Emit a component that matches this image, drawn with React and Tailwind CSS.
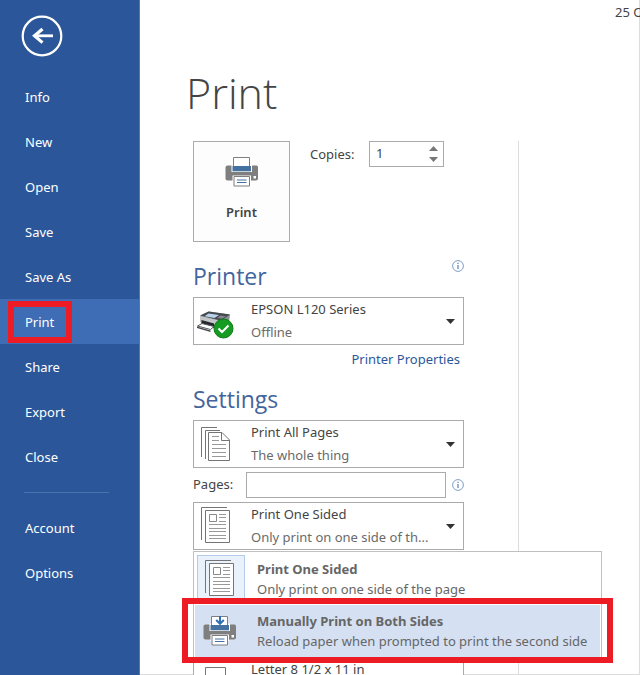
import React, { useState } from "react";

const mainLinks = ["Info", "New", "Open", "Save", "Save As", "Print", "Share", "Export", "Close"];
const accountLinks = ["Account", "Options"];

function BackIcon() {
  return (
    <svg width="42" height="42" viewBox="0 0 42 42" fill="none" stroke="#fff">
      <circle cx="21" cy="21" r="19.3" strokeWidth="2.2" />
      <path d="M13 20.8H32" strokeWidth="2.8" />
      <path d="M21.5 14L13.5 20.8L21.5 27.6" strokeWidth="3.2" />
    </svg>
  );
}

function PrinterIcon({ manual = false }) {
  return (
    <svg width="34" height="32" viewBox="0 0 34 32" fill="none">
      <path d="M2.5 9.5H31.5Q33 9.5 33 11.5V22.5Q33 24.5 31 24.5H2.5Q0.5 24.5 0.5 22.5V11.5Q0.5 9.5 2.5 9.5Z" fill="#7f7f7f" />
      <path d="M6.5 8.5H27V16H6.5Z" fill="#fff" />
      <path d="M8.5 1.5H24.5V12H8.5Z" fill="#fff" stroke="#7f7f7f" />
      <path d="M7.5 10H26V15.3H7.5Z" fill="#44719f" />
      <path d="M7.5 19.5H26V26H7.5Z" fill="#fff" />
      <path d="M9 20.5H24.5V30H9Z" fill="#fff" stroke="#7f7f7f" />
      <path d="M12 24H21.5M12 26.5H21.5" stroke="#44719f" />
      <path d="M28.5 20H31V22.5H28.5Z" fill="#fff" />
      {manual && <path d="M17 1V9M13.2 5L17 8.8L20.8 5" stroke="#2f6eb5" strokeWidth="2" />}
    </svg>
  );
}

function DeviceIcon() {
  return (
    <svg width="44" height="46" viewBox="0 0 44 46" fill="none">
      <path d="M6 18L15 13.5L36 16.5L35 24L26 32L7 25Z" fill="#8d9196" />
      <path d="M6 17.5L14.5 13.5L36 16.5L27 22.5Z" fill="#45484d" />
      <path d="M14.5 15.5L25 17L20.5 20L10.5 18.2Z" fill="#b9d3ec" />
      <path d="M26.5 17.5L32 18.2L28 20.8L23 20Z" fill="#84888e" />
      <path d="M6 18L27 23V33L21 31L19 27L6 24Z" fill="#c3c6ca" />
      <path d="M7.5 22L20 25.5V30L7.5 26.5Z" fill="#25272a" />
      <path d="M3.5 28L8 25.5L20 28.5L16.5 31.5Z" fill="#fff" stroke="#55585c" />
      <path d="M3 28.5L16.5 32.5V34L3 30Z" fill="#45484d" />
      <circle cx="29.5" cy="30.5" r="9.5" fill="#169c22" stroke="#0b7a17" />
      <path d="M24.5 30.5L28 34L34.5 27.5" stroke="#fff" strokeWidth="2" />
    </svg>
  );
}

function PagesIcon() {
  return (
    <svg width="44" height="46" viewBox="0 0 44 46" fill="none" stroke="#757575">
      <path d="M23 6.5H7.5V36" />
      <path d="M26 9.5H11.5V38" />
      <path d="M14.5 11.5H28L35.5 19V39.5H14.5Z" fill="#fff" />
      <path d="M27.5 11.5V19.5H35.5" />
      <path d="M18 15.5H25M18 19.5H25M18 23.5H32M18 27.5H32M18 31.5H32M18 35.5H32" stroke="#999" />
    </svg>
  );
}

function OneSidedIcon() {
  return (
    <svg width="44" height="46" viewBox="0 0 44 46" fill="none" stroke="#757575">
      <path d="M33 4.5H7.5V37" />
      <path d="M11.5 7.5H35.5V39.5H11.5Z" fill="#fff" />
      <path d="M15.5 11.5H22.5V18.5H15.5Z" stroke="#8a8a8a" />
      <path d="M25 11.5H32M25 14.5H32M25 18.5H32M15 21.5H32M15 25.5H32M15 28.5H32M15 32.5H32M15 35.5H32" stroke="#999" />
    </svg>
  );
}

function PaperIcon() {
  return (
    <svg width="44" height="46" viewBox="0 0 44 46" fill="none" stroke="#757575">
      <path d="M11.5 9.5H31.5V40H11.5Z" fill="#fff" />
    </svg>
  );
}

function InfoButton({ label }) {
  return (
    <button type="button" aria-label={label} className="h-3 w-3 shrink-0">
      <svg width="12" height="12" viewBox="0 0 12 12" fill="none">
        <circle cx="6" cy="6" r="5.4" stroke="#7f9fc6" />
        <path d="M6 5V9M6 2.8V4" stroke="#5b7fae" strokeWidth="1.2" />
      </svg>
    </button>
  );
}

function NavItem({ label, active }) {
  return (
    <li>
      <a
        href="#"
        className={
          active
            ? "relative flex h-[45px] items-center bg-[#3e6db5] pl-[25px] pt-[2px]"
            : "flex h-[45px] items-center pl-[25px] pt-[2px] hover:bg-[#3e6db5]"
        }
      >
        {label}
        {active && <span className="absolute left-2 top-[2px] h-[42px] w-16 border-6 border-[#ed1c24]" />}
      </a>
    </li>
  );
}

// Two-line drop-down: the select fills the whole box, icon and hint lie in the same grid
function SettingSelect({ label, value, hint, icon }) {
  return (
    <div className="grid h-12 grid-cols-[57px_1fr_26px] grid-rows-2 border border-[#ababab] bg-white">
      <select
        aria-label={label}
        className="col-span-full col-start-1 row-span-2 row-start-1 appearance-none bg-transparent pb-[22px] pl-[57px] text-[#444]"
      >
        <option>{value}</option>
      </select>
      <span className="pointer-events-none col-start-1 row-span-2 row-start-1">{icon}</span>
      <span className="pointer-events-none col-start-2 row-start-2 whitespace-nowrap leading-[22px] text-[#6a6a6a]">
        {hint}
      </span>
      <span className="pointer-events-none col-start-3 row-span-2 row-start-1 flex items-center pl-[9px]">
        <svg width="9" height="5" viewBox="0 0 9 5">
          <path d="M0 0H9L4.5 5Z" fill="#333" />
        </svg>
      </span>
    </div>
  );
}

function SidesMenu() {
  return (
    <ul
      role="listbox"
      aria-label="Sides"
      className="absolute left-0 top-[49px] z-10 w-[409px] border border-[#c0c0c0] bg-white p-px text-[#666]"
    >
      <li role="option" aria-selected="true" className="flex h-[52px] items-center">
        <span className="ml-[2px] flex h-12 w-12 items-center border border-[#b3cbea] bg-[#e9f1fb]">
          <OneSidedIcon />
        </span>
        <span className="pl-3 leading-5">
          <b className="block">Print One Sided</b>
          <span className="block">Only print on one side of the page</span>
        </span>
      </li>
      <li role="option" aria-selected="false" className="relative flex h-[52px] items-center bg-[#d5e0f2]">
        <span className="flex w-[50px] pl-2">
          <PrinterIcon manual />
        </span>
        <span className="whitespace-nowrap pl-3 leading-5">
          <b className="block">Manually Print on Both Sides</b>
          <span className="block">Reload paper when prompted to print the second side</span>
        </span>
        <span className="pointer-events-none absolute -inset-x-[13px] -bottom-[6px] -top-[7px] border-6 border-[#ed1c24]" />
      </li>
    </ul>
  );
}

function Sidebar() {
  return (
    <nav className="w-[140px] shrink-0 border-r border-[#5577ad] bg-[#2b579a] text-white">
      <button type="button" aria-label="Back" className="ml-[21px] mt-[15px] block">
        <BackIcon />
      </button>
      <ul className="mt-[17px]">
        {mainLinks.map((label) => (
          <NavItem key={label} label={label} active={label === "Print"} />
        ))}
      </ul>
      <hr className="mb-3 ml-6 mr-[30px] mt-[13px] border-[#4a72ae]" />
      <ul>
        {accountLinks.map((label) => (
          <NavItem key={label} label={label} />
        ))}
      </ul>
    </nav>
  );
}

function App() {
  const [copies, setCopies] = useState(1);
  const [pages, setPages] = useState("");

  return (
    <div className="flex h-screen overflow-hidden bg-white font-['Noto_Sans',sans-serif] text-[13px] text-[#444]">
      <Sidebar />

      <main className="flex min-w-0 flex-1 flex-col border-b border-r border-[#dcdcdc]">
        <header className="flex h-6 justify-end">
          <p className="w-6 whitespace-nowrap leading-6">25 O</p>
        </header>
        <h1 className="h-[117px] pl-[46px] pt-9 font-['Open_Sans',sans-serif] text-[43px] font-light leading-[66px]">
          Print
        </h1>

        <div className="flex min-h-0 flex-1 pl-[53px]">
          <section className="w-[326px] border-r border-[#dcdcdc]">
            <div className="flex items-start">
              <button
                type="button"
                className="flex h-[101px] w-[97px] flex-col items-center border border-[#ababab] bg-[#fdfdfd] pt-[14px] font-semibold"
              >
                <PrinterIcon />
                <span className="mt-[15px]">Print</span>
              </button>
              <label htmlFor="copies" className="ml-5 w-[59px] leading-[26px]">
                Copies:
              </label>
              <div className="flex h-[26px] w-[75px] border border-[#ababab]">
                <input
                  id="copies"
                  type="text"
                  inputMode="numeric"
                  value={copies}
                  onChange={(e) => setCopies(Number(e.target.value) || 1)}
                  className="min-w-0 flex-1 pl-[6px] outline-none"
                />
                <div className="flex w-5 flex-col justify-center gap-[6px] pl-[6px]">
                  <button type="button" aria-label="More copies" onClick={() => setCopies(copies + 1)}>
                    <svg width="9" height="5" viewBox="0 0 9 5">
                      <path d="M0 5H9L4.5 0Z" fill="#777" />
                    </svg>
                  </button>
                  <button type="button" aria-label="Fewer copies" onClick={() => setCopies(Math.max(1, copies - 1))}>
                    <svg width="9" height="5" viewBox="0 0 9 5">
                      <path d="M0 0H9L4.5 5Z" fill="#777" />
                    </svg>
                  </button>
                </div>
              </div>
            </div>

            <div className="w-[271px]">
              <div className="mt-[14px] flex h-[41px] justify-between pt-1">
                <h2 className="font-['Open_Sans',sans-serif] text-[23px] leading-8 text-[#44659c]">Printer</h2>
                <InfoButton label="Printer status" />
              </div>
              <SettingSelect label="Printer" value="EPSON L120 Series" hint="Offline" icon={<DeviceIcon />} />
              <p className="h-7 pr-1 text-right leading-7">
                <a href="#" className="text-[#2b579a]">
                  Printer Properties
                </a>
              </p>

              <h2 className="mt-[6px] h-[41px] font-['Open_Sans',sans-serif] text-[23px] leading-10 text-[#44659c]">
                Settings
              </h2>
              <SettingSelect label="Print range" value="Print All Pages" hint="The whole thing" icon={<PagesIcon />} />
              <div className="my-1 flex h-[26px] items-center">
                <label htmlFor="pages" className="w-[53px]">
                  Pages:
                </label>
                <input
                  id="pages"
                  type="text"
                  value={pages}
                  onChange={(e) => setPages(e.target.value)}
                  className="mr-[6px] h-[26px] min-w-0 flex-1 border border-[#ababab] px-1"
                />
                <InfoButton label="Page range help" />
              </div>
              <div className="relative">
                <SettingSelect
                  label="Sides"
                  value="Print One Sided"
                  hint="Only print on one side of th..."
                  icon={<OneSidedIcon />}
                />
                <SidesMenu />
              </div>
              <div className="mt-[107px]">
                <SettingSelect label="Paper size" value="Letter 8 1/2 x 11 in" icon={<PaperIcon />} />
              </div>
            </div>
          </section>
        </div>
      </main>
    </div>
  );
}

export default App;
